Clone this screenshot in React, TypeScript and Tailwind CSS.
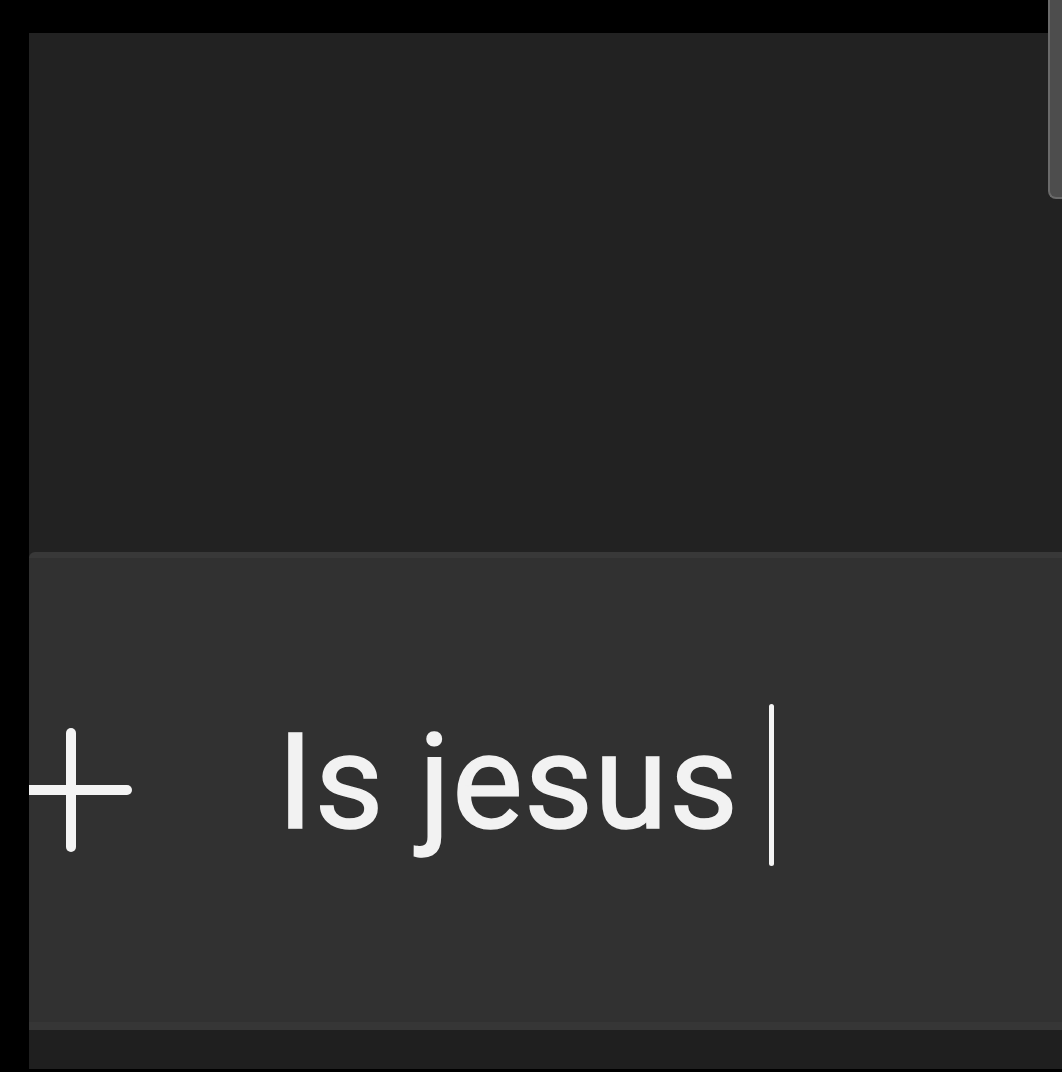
import React from "react";

const PlusIcon: React.FC = () => (
  <svg
    width="122"
    height="124"
    viewBox="0 0 122 124"
    fill="none"
    stroke="#f4f4f4"
    strokeWidth="10"
    strokeLinecap="round"
    className="shrink-0"
  >
    <path d="M61 5v114" />
    <path d="M5 62h112" />
  </svg>
);

const App: React.FC = () => {
  return (
    <div className="relative w-full h-[1072px] bg-black pl-[29px] pt-[33px] pb-[3px] overflow-hidden">
      <div className="flex flex-col h-full overflow-hidden bg-[#212121]">
        {/* chat history area, empty */}
        <div className="h-[519px] shrink-0 bg-[#222222]" />

        {/* composer */}
        <div className="h-[478px] shrink-0 flex items-center bg-[#313131] border-t-[6px] border-t-[#383838] border-b-[8px] border-b-[#363636] rounded-tl-[6px]">
          <div className="ml-[-19px]">
            <PlusIcon />
          </div>
          <div className="ml-[145px] flex items-center font-['Roboto','Noto_Sans',sans-serif] text-[134px] font-normal tracking-[1px] leading-none text-[#f2f2f2] [-webkit-text-stroke:1.5px_#f2f2f2] mt-[-14px]">
            <span>Is jesus</span>
            <span className="ml-[30px] mt-[4px] w-[5px] h-[162px] bg-[#f4f4f4] rounded-full" />
          </div>
        </div>

        <div className="flex-1 bg-[#1f1f1f]" />
      </div>

      {/* scrollbar thumb */}
      <div className="absolute top-0 right-0 w-[14px] h-[199px] bg-[#4d4d4d] border-l-[2px] border-b-[2px] border-[#6a6a6a] rounded-bl-[8px]" />
    </div>
  );
};

export default App;
